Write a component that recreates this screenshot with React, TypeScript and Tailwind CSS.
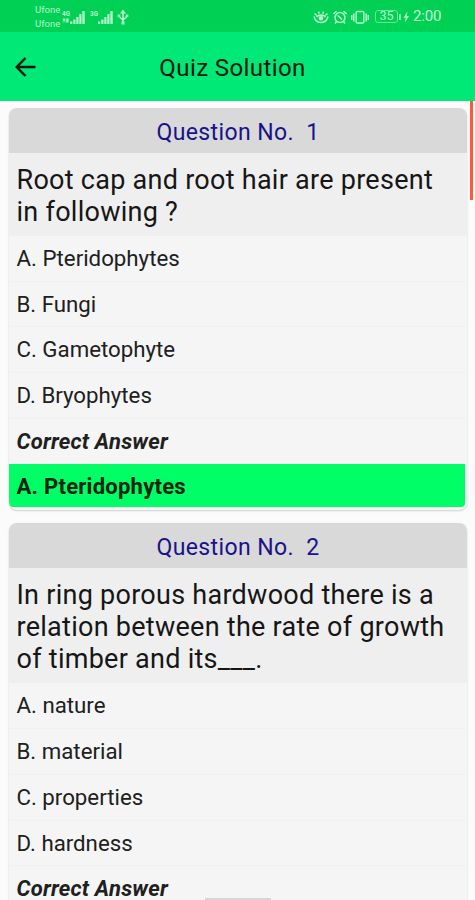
interface Question {
  id: number;
  text: string;
  options: string[];
  answer: string;
}

const QUESTIONS: Question[] = [
  {
    id: 1,
    text: "Root cap and root hair are present in following ?",
    options: ["A. Pteridophytes", "B. Fungi", "C. Gametophyte", "D. Bryophytes"],
    answer: "A. Pteridophytes",
  },
  {
    id: 2,
    text: "In ring porous hardwood there is a relation between the rate of growth of timber and its___.",
    options: ["A. nature", "B. material", "C. properties", "D. hardness"],
    answer: "A. nature",
  },
];

function SignalBars({ label, arrows }: { label: string; arrows?: boolean }) {
  return (
    <svg width="24" height="16" viewBox="0 0 24 16" fill="currentColor" className="shrink-0">
      <text x="0" y="6.5" fontSize="7.5" fontWeight="700" textLength="8" lengthAdjust="spacingAndGlyphs">{label}</text>
      {arrows && <path d="M.8 9.500h2.500v4H2.600v-2H1.500v2H.8zM4.200 9.500h2.400v4H4.200z" />}
      <rect x="8" y="12.500" width="2.200" height="2.500" />
      <rect x="11.300" y="10.500" width="2.200" height="4.500" />
      <rect x="14.300" y="8" width="2.200" height="7" />
      <rect x="17.300" y="5" width="2.200" height="10" />
      <rect x="20.300" y="2" width="2.400" height="13" />
    </svg>
  );
}

function StatusBar() {
  return (
    <div className="flex h-8 items-center justify-between bg-[#00d154] pt-px pr-[34px] pl-[35px] text-[#b5f7ca]">
      <div className="flex items-center">
        <div className="flex w-[27px] flex-col text-[9.5px] leading-[14px]">
          <span>Ufone</span>
          <span>Ufone</span>
        </div>
        <div className="flex items-center gap-[4px]">
          <SignalBars label="4G" arrows />
          <SignalBars label="3G" />
        </div>
        <svg width="12" height="16" viewBox="0 0 12 16" fill="none" stroke="currentColor" strokeWidth="1.5" className="ml-[3px]">
          <path d="M6 14V3M2 7.500L6 11l4-3.500" />
          <path d="M6 .5l3 4H3z" fill="currentColor" stroke="none" />
          <path d="M.7 5.500h2.600v2.500H.7zM8.700 5.500h2.600v2.500H8.700zM4.500 12.500h3v3h-3z" fill="currentColor" stroke="none" />
        </svg>
      </div>
      <div className="flex items-center">
        <svg width="16" height="16" viewBox="0 0 16 16" fill="none" stroke="currentColor" strokeWidth="1.5">
          <path d="M1 7.500c1 4 4 6 7 6s6-2 7-6M3.500 8c2.500-2.700 6.500-2.700 9 0M1.500 4.500l2.300 2M5.500 2.500l.7 2.300M10.500 2.500l-.7 2.300M14.500 4.500l-2.300 2" />
          <circle cx="8" cy="9.300" r="2.300" fill="currentColor" stroke="none" />
        </svg>
        <svg width="16" height="16" viewBox="0 0 16 16" fill="none" stroke="currentColor" strokeWidth="1.5" className="ml-[3px]">
          <circle cx="8" cy="8.500" r="5" />
          <path d="M1.300 5l3.200-2.800M14.700 5l-3.200-2.800M5.500 6.500L8 8.500l2 2.200M4.500 12.500L3 14.500M11.500 12.500l1.500 2" />
        </svg>
        <svg width="18" height="16" viewBox="0 0 18 16" fill="none" stroke="currentColor" strokeWidth="1.5" className="ml-[3px]">
          <rect x="5.200" y="2.500" width="7.600" height="11.500" rx="1" />
          <path d="M2.800 4.500v8M15.200 4.500v8M.700 6v5M17.300 6v5" />
        </svg>
        <div className="ml-[6px] flex h-[13px] w-[23px] items-center justify-center rounded-[3px] border border-[#68e894] text-[12.5px] leading-none">35</div>
        <svg width="11" height="14" viewBox="0 0 11 14" fill="currentColor" className="ml-[1px]">
          <rect x="0" y="4" width="1.700" height="6" />
          <path d="M8.500 1.500L4.500 7.800h2.300l-1 4.700 4.200-6.500H7.700z" />
        </svg>
        <span className="ml-[3px] w-[28px] text-[15px] leading-none tracking-[-0.2px] whitespace-nowrap text-[#c9fad8]">2:00</span>
      </div>
    </div>
  );
}

function AppBar() {
  return (
    <header className="grid h-[69px] grid-cols-[1fr_auto_1fr] items-center bg-[#00e876] pr-[21px] pl-[15px]">
      <svg width="21" height="20" viewBox="0 0 21 20" fill="none" stroke="#081810" strokeWidth="2.400" className="-mr-1">
        <path d="M20.500 10H2M10.500 1L1.700 10l8.800 9" />
      </svg>
      <h1 className="-ml-[4px] pt-[3px] text-[24px] tracking-[0.4px] whitespace-nowrap text-[#07190f]">Quiz Solution</h1>
    </header>
  );
}

function QuestionCard({ question }: { question: Question }) {
  return (
    <section className="overflow-hidden rounded-lg bg-[#f8f8f8] pb-[3px] shadow-[0_1px_2px_rgba(0,0,0,0.18)]">
      <h2 className="h-[45px] bg-[#d9d9d9] pt-[2px] text-center text-[23px] leading-[45px] tracking-[0.4px] whitespace-pre text-[#19128a]">
        {`Question No.  ${question.id}`}
      </h2>
      <p className="bg-[#efefef] pt-[11px] pr-[8px] pb-[8px] pl-[7.500px] text-[27px] leading-[32px] tracking-[0.27px] text-[#161616]">
        {question.text}
      </p>
      <ul className="text-[22.250px] text-[#202020]">
        {question.options.map((option) => (
          <li key={option} className="h-[45.700px] border-b border-[#f1f1f1] bg-[#f5f5f5] px-[7.500px] leading-[45px]">
            {option}
          </li>
        ))}
      </ul>
      <p className="h-[45.700px] bg-[#f5f5f5] px-[7.500px] text-[22px] leading-[45px] font-bold tracking-[0.2px] text-[#202020] italic">Correct Answer</p>
      <p className="mr-[2px] h-[43px] rounded-b bg-[#00ff66] px-[7.500px] text-[22px] leading-[45px] font-bold tracking-[0.25px] text-[#06240f]">
        {question.answer}
      </p>
    </section>
  );
}

export default function App() {
  return (
    <div className="relative flex h-[900px] w-[475px] flex-col overflow-hidden bg-[#fbfbfb] font-['Roboto',sans-serif]">
      <StatusBar />
      <AppBar />
      <main className="flex min-h-0 flex-1 flex-col gap-[13px] overflow-hidden pt-[7px] pr-[8px] pl-[9px]">
        {QUESTIONS.map((question) => (
          <div key={question.id} className="shrink-0">
            <QuestionCard question={question} />
          </div>
        ))}
      </main>
      {/* scroll indicator */}
      <div className="absolute top-[101px] right-[2px] h-[99px] w-[3px] bg-[#ff5a36]" />
      {/* gesture handle */}
      <div className="absolute bottom-0 left-[205px] h-[2px] w-[66px] bg-[#d4d4d4]" />
    </div>
  );
}
